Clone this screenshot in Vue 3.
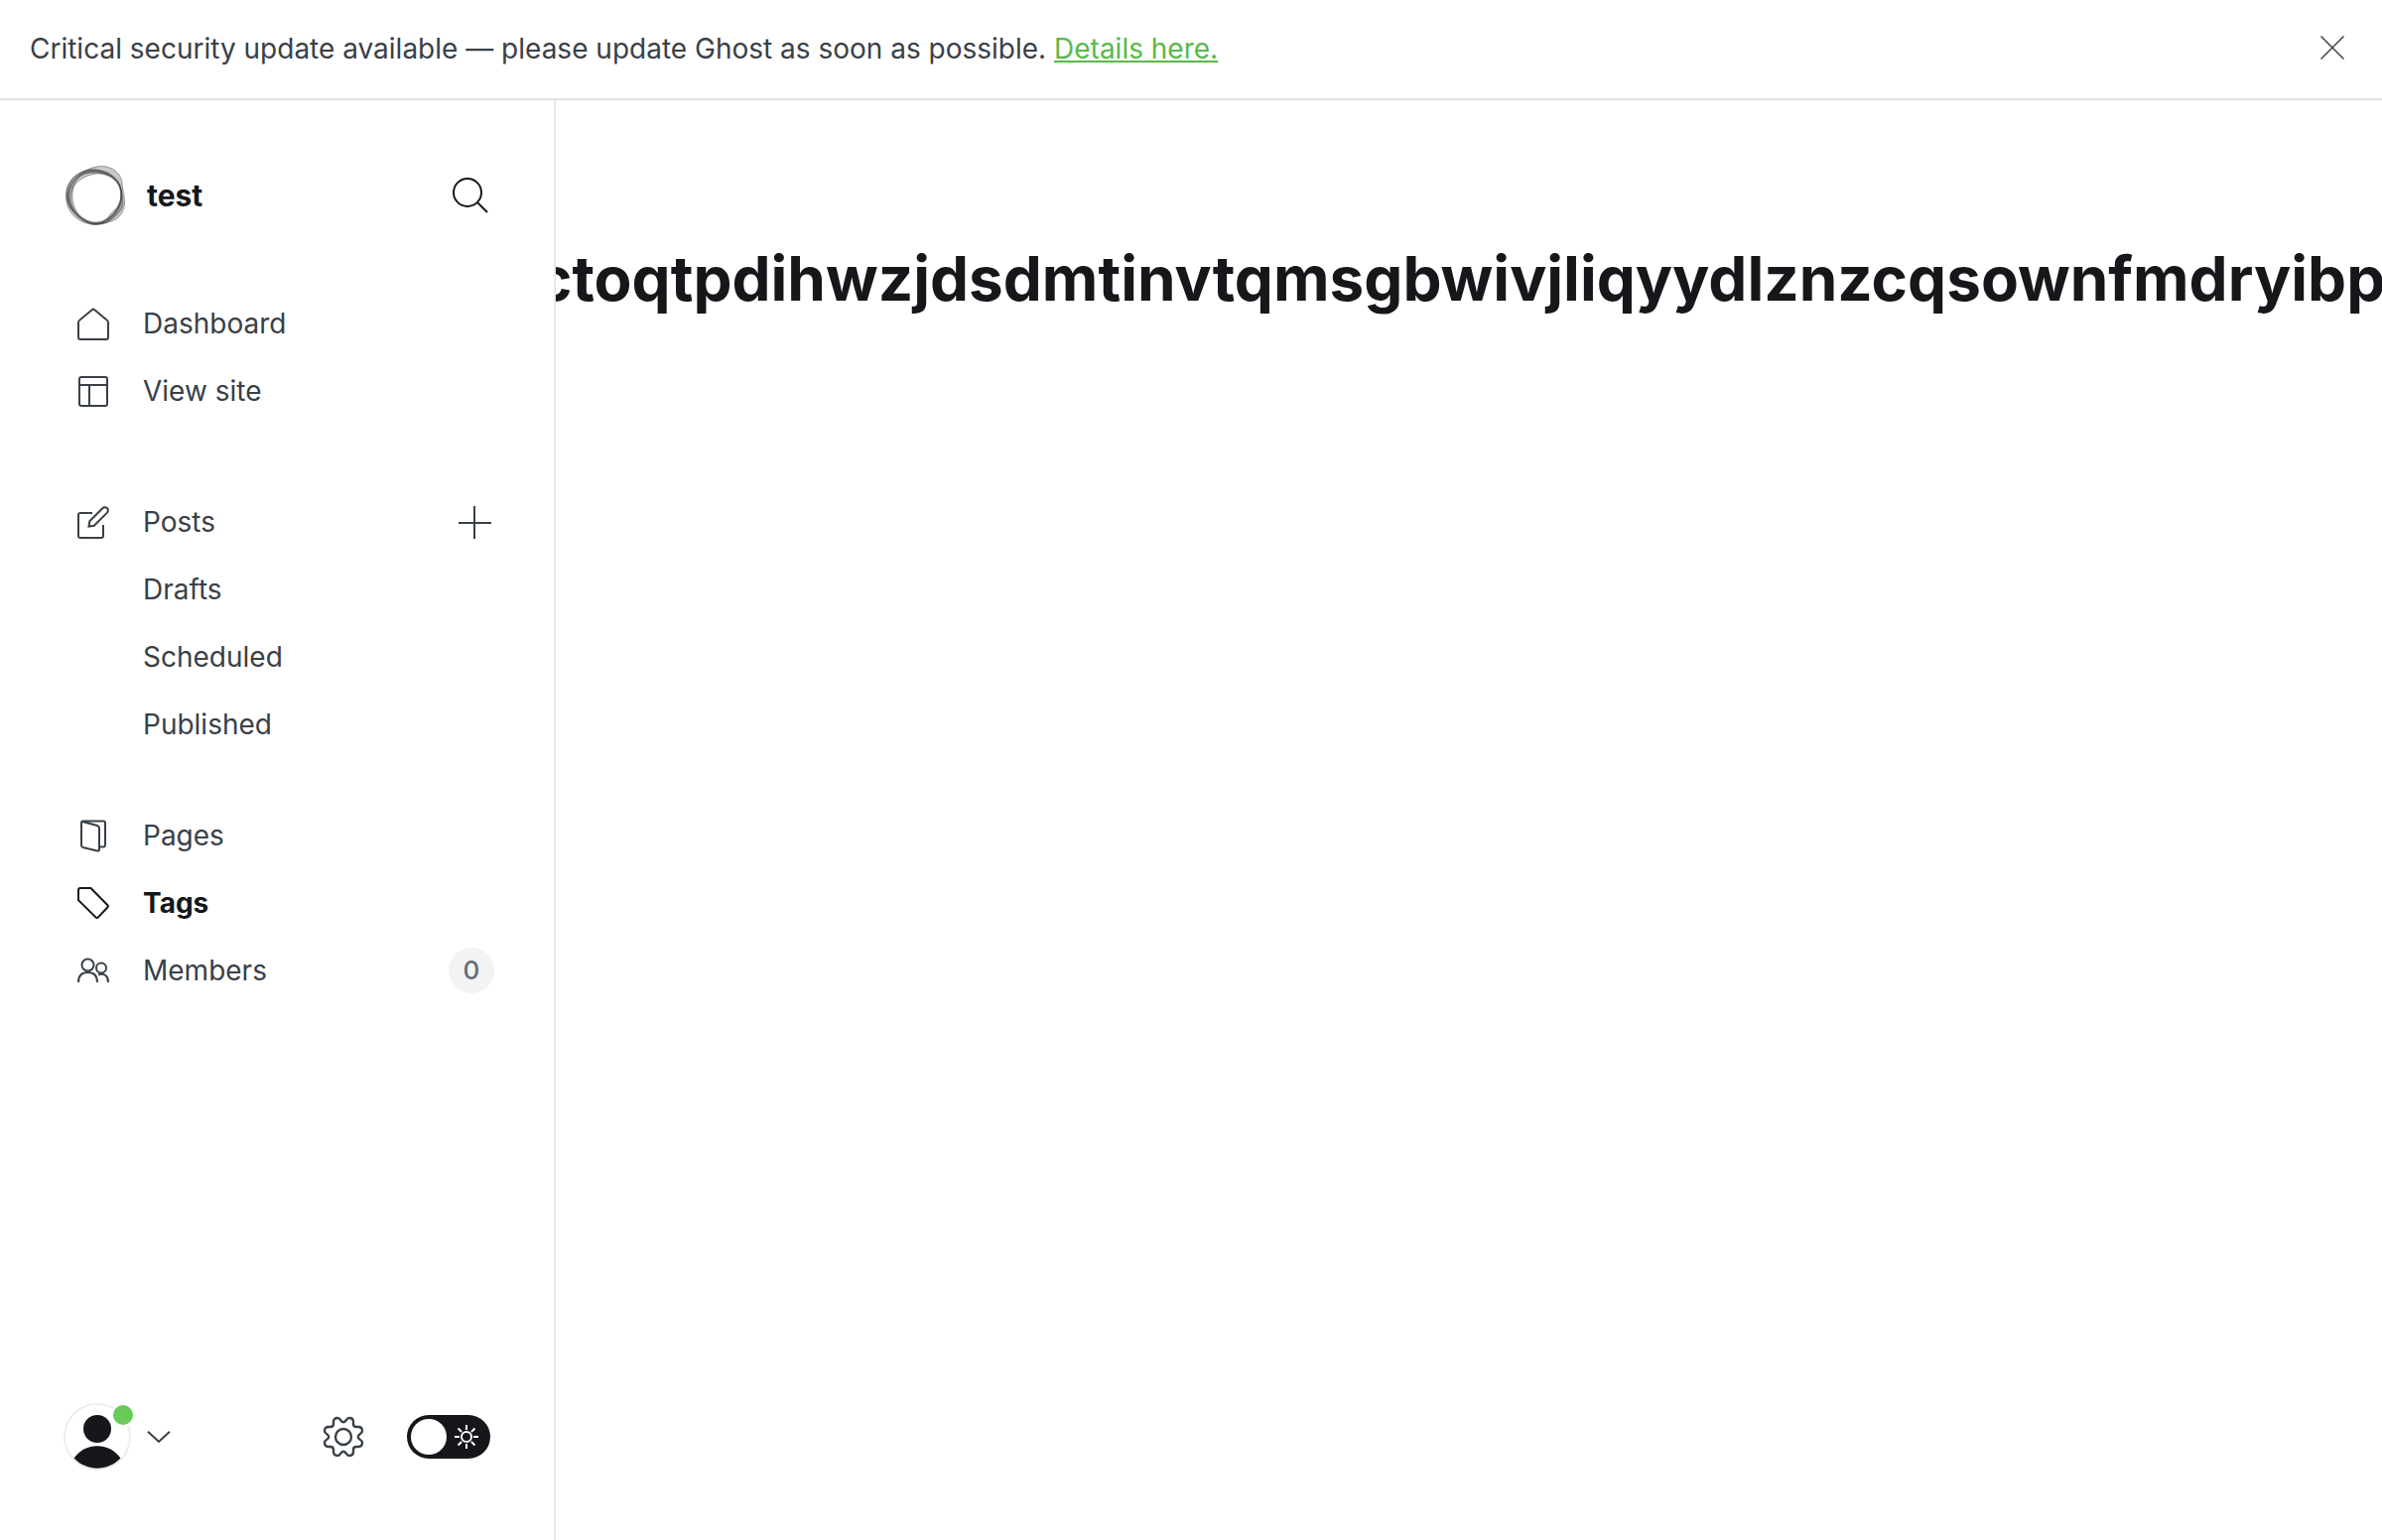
<script setup>
const sections = [
  {
    id: 'site',
    items: [
      { label: 'Dashboard', icon: 'house' },
      { label: 'View site', icon: 'layout' },
    ],
  },
  {
    id: 'posts',
    items: [
      { label: 'Posts', icon: 'posts', add: true },
      { label: 'Drafts' },
      { label: 'Scheduled' },
      { label: 'Published' },
    ],
  },
  {
    id: 'manage',
    items: [
      { label: 'Pages', icon: 'pages' },
      { label: 'Tags', icon: 'tag', active: true },
      { label: 'Members', icon: 'members', count: 0 },
    ],
  },
]

const icons = {
  house: ['M3 12 Q1 13.3 1 15 V30 Q1 32 3 32 H29 Q31 32 31 30 V15 Q31 13.3 29 12 L17 2 Q16 1.200 15 2 Z'],
  layout: [
    'M4 2 H28 Q30 2 30 4 V29 Q30 31 28 31 H4 Q2 31 2 29 V4 Q2 2 4 2 Z',
    'M2 10 H30',
    'M12 10 V31',
  ],
  posts: [
    'M15 7 H3 Q1 7 1 9 V30 Q1 32 3 32 H24 Q26 32 26 30 V19',
    'M11.5 20.5 L12.3 15.2 L25.3 2.2 A3.2 3.2 0 0 1 30 6.6 L16.8 19.7 Z',
  ],
  pages: [
    'M5 2 L20 6 Q22 6.800 22 8.500 V30 Q22 32 20 31.500 L5.5 28 Q4 27.500 4 26 V3.5 Q4 1.500 5.5 1.500 H26 Q28 1.500 28 3.5 V25.500 Q28 27.500 26 27.500 H22',
  ],
  tag: ['M3 1 H13.5 L30.5 18.3 Q31.5 19.3 30.5 20.3 L20.7 30.6 Q19.7 31.6 18.7 30.6 L1 13.2 V3 Q1 1 3 1 Z'],
  members: [
    'M10.5 4.5 A6 6 0 0 1 10.5 16.5 A6 6 0 0 1 10.5 4.5 Z',
    'M1 28 C1 21 5 18 10.5 18 S20 21 20 28',
    'M24 8.5 A5 5 0 0 1 24 18.5 A5 5 0 0 1 24 8.5 Z',
    'M21 20.2 C28 18.5 31 22 31 28',
  ],
}

const rays = [0, 45, 90, 135, 180, 225, 270, 315]
</script>

<template>
  <div class="app">
    <div class="alert" role="alert">
      <p>
        Critical security update available — please update Ghost as soon as possible.
        <a href="#details">Details here.</a>
      </p>
      <button class="close" type="button" aria-label="Dismiss">
        <svg viewBox="0 0 24 24" width="24" height="24"><path d="M0.500 0.500 L23.500 23.500 M23.500 0.500 L0.500 23.500" /></svg>
      </button>
    </div>

    <div class="viewport">
      <nav class="sidebar">
        <header class="brand">
          <svg class="logo" viewBox="0 0 60 60" width="60" height="60">
            <g fill="#15171a" fill-rule="evenodd" stroke="#15171a">
              <path d="M0.500 31C0.500 13 14 5 26 4C42 3 57 15 57 29S47 59 30 59S0.500 47 0.500 31ZM7 31C7 45 17 57 30 57.500S56 43 56 29S43 7 28 7S7 17 7 31Z" />
              <path d="M2 33C2 18 18 0.500 36 0.500C48 0.500 56 8 57 17C57.500 25 61 35 59 42C57 50 51 55 46 56C40 58 37 59 31 59S2 49 2 33ZM5 32C5 46 20 58 32 57S51 46 54 40S56 29 56 24S47 8 34 8S5 17 5 32Z" />
              <path d="M1 27C3 13 16 3 29 4S54 11 56 24S60 40 53 48S40 59.500 29 59.500S0 43 1 27ZM3 28C2 43 17 58 29 58.500S42 51 48 46S57 35 55 24S42 6 29 6S4 15 3 28Z" />
            </g>
          </svg>
          <span class="name">test</span>
          <button class="search" type="button" aria-label="Search site">
            <svg viewBox="0 0 36 36" width="36" height="36">
              <circle cx="15" cy="15" r="14" />
              <path d="M25 25 L35 35" />
            </svg>
          </button>
        </header>

        <ul v-for="section in sections" :key="section.id" class="menu">
          <li v-for="item in section.items" :key="item.label">
            <a :href="'#' + item.label.toLowerCase()" :class="{ active: item.active }">
              <span class="icon">
                <svg v-if="item.icon" viewBox="0 0 32 32" width="32" height="32">
                  <path v-for="d in icons[item.icon]" :key="d" :d="d" />
                </svg>
              </span>
              {{ item.label }}
            </a>
            <button v-if="item.add" class="add" type="button" aria-label="New post">
              <svg viewBox="0 0 34 34" width="34" height="34"><path d="M18 1 V34 M2 18 H35" /></svg>
            </button>
            <span v-if="item.count !== undefined" class="count">{{ item.count }}</span>
          </li>
        </ul>

        <footer class="tools">
          <button class="account" type="button" aria-label="Account menu">
            <span class="avatar">
              <svg viewBox="0 0 68 68" width="68" height="68">
                <circle class="ring" cx="34" cy="34" r="33" />
                <circle class="ink" cx="34" cy="26" r="14" />
                <path class="ink" d="M10.500 55.500 C22 39 46 39 57.500 55.500 C45 69 23 69 10.500 55.500 Z" />
              </svg>
              <span class="status"></span>
            </span>
            <svg class="chevron" viewBox="0 0 24 12" width="24" height="12"><path d="M1 0.700 L12 11 L23 0.700" /></svg>
          </button>
          <a class="settings" href="#settings" aria-label="Settings">
            <svg viewBox="0 0 40 40" width="40" height="40">
              <circle cx="20" cy="20" r="8" />
              <path d="M10 5Q10 1 14 1Q16 1 17 3Q20 7.500 23 3Q24 1 26 1Q30 1 30 5V7Q30 10 33 10H35Q39 10 39 14Q39 16 37 17Q32.500 20 37 23Q39 24 39 26Q39 30 35 30H33Q30 30 30 33V35Q30 39 26 39Q24 39 23 37Q20 32.500 17 37Q16 39 14 39Q10 39 10 35V33Q10 30 7 30H5Q1 30 1 26Q1 24 3 23Q7.500 20 3 17Q1 16 1 14Q1 10 5 10H7Q10 10 10 7Z" />
            </svg>
          </a>
          <label class="theme">
            <input type="checkbox" aria-label="Dark mode" />
            <span class="knob"></span>
            <svg viewBox="0 0 24 24" width="24" height="24">
              <circle cx="12" cy="12" r="5" />
              <path v-for="angle in rays" :key="angle" d="M12 0 V5" :transform="`rotate(${angle} 12 12)`" />
            </svg>
          </label>
        </footer>
      </nav>

      <main class="content">
        <h1>ctoqtpdihwzjdsdmtinvtqmsgbwivjliqyydlznzcqsownfmdryibpl</h1>
      </main>
    </div>
  </div>
</template>

<style>
body {
  margin: 0;
  background: #fff;
}
</style>

<style scoped>
.app {
  display: flex;
  flex-direction: column;
  height: 100vh;
  overflow: hidden;
  color: #394047;
  font: 400 28px/40px Inter, sans-serif;
}

svg {
  display: block;
  overflow: visible;
  fill: none;
  stroke: currentColor;
  stroke-width: 2;
}

button {
  display: flex;
  padding: 0;
  border: 0;
  background: none;
  color: inherit;
  cursor: pointer;
}

.alert {
  display: flex;
  align-items: center;
  justify-content: space-between;
  padding: 29px 38px 30px 30px;
  border-bottom: 2px solid #dfe1e3;
}

.alert p {
  margin: 0;
}

.alert a {
  color: #5ab84a;
  text-underline-offset: 2px;
  text-decoration-thickness: 2px;
}

.close {
  margin-bottom: 2px;
}

.close svg {
  stroke-width: 1.5;
}

.viewport {
  display: flex;
  flex: 1;
  min-height: 0;
}

.sidebar {
  display: flex;
  flex: none;
  flex-direction: column;
  box-sizing: border-box;
  width: 560px;
  padding: 66px 64px 70px;
  border-right: 2px solid #e6e9eb;
}

.brand {
  display: flex;
  align-items: center;
  margin-bottom: 65px;
  padding: 0 2px;
  color: #15171a;
}

.logo {
  stroke-width: 0.7;
}

.logo path {
  fill-opacity: 0.24;
  stroke-opacity: 0.5;
}

.name {
  flex: 1;
  margin-left: 22px;
  font-size: 30px;
  font-weight: 700;
}

.menu {
  margin: 0 0 64px;
  padding: 0;
  list-style: none;
}

.menu + .menu + .menu {
  margin-top: -20px;
}

.menu li {
  display: flex;
  align-items: center;
  justify-content: space-between;
  height: 68px;
}

.menu a {
  display: flex;
  align-items: center;
  padding-left: 14px;
  color: inherit;
  text-decoration: none;
}

.menu a.active {
  color: #15171a;
  font-weight: 700;
}

.icon {
  width: 66px;
}

.count {
  width: 46px;
  margin-right: -4px;
  border-radius: 24px;
  background: #f1f3f4;
  color: #626d79;
  font-size: 26px;
  font-weight: 500;
  line-height: 46px;
  text-align: center;
}

.tools {
  display: flex;
  align-items: center;
  margin-top: auto;
}

.account {
  align-items: center;
  gap: 16px;
  margin-right: auto;
}

.avatar {
  position: relative;
}

.ring {
  stroke: #ebeef0;
}

.ink {
  fill: #15171a;
  stroke: none;
}

.status {
  position: absolute;
  top: 0;
  right: -4px;
  width: 20px;
  height: 20px;
  border: 2px solid #fff;
  border-radius: 50%;
  background: #69cb57;
}

.settings {
  margin-right: 44px;
  color: #394047;
}

.settings svg {
  stroke-width: 2.4;
}

.theme {
  display: flex;
  align-items: center;
  gap: 8px;
  box-sizing: border-box;
  width: 84px;
  height: 44px;
  padding: 4px;
  border-radius: 22px;
  background: #15171a;
  color: #fff;
}

.theme input {
  position: absolute;
  opacity: 0;
}

.knob {
  width: 36px;
  height: 36px;
  border-radius: 50%;
  background: #fff;
}

.content {
  flex: 1;
  min-width: 0;
  overflow: hidden;
}

h1 {
  display: flex;
  justify-content: center;
  margin: 0;
  padding-top: 140px;
  color: #15171a;
  font-size: 62px;
  font-weight: 700;
  line-height: 80px;
  white-space: nowrap;
}
</style>
